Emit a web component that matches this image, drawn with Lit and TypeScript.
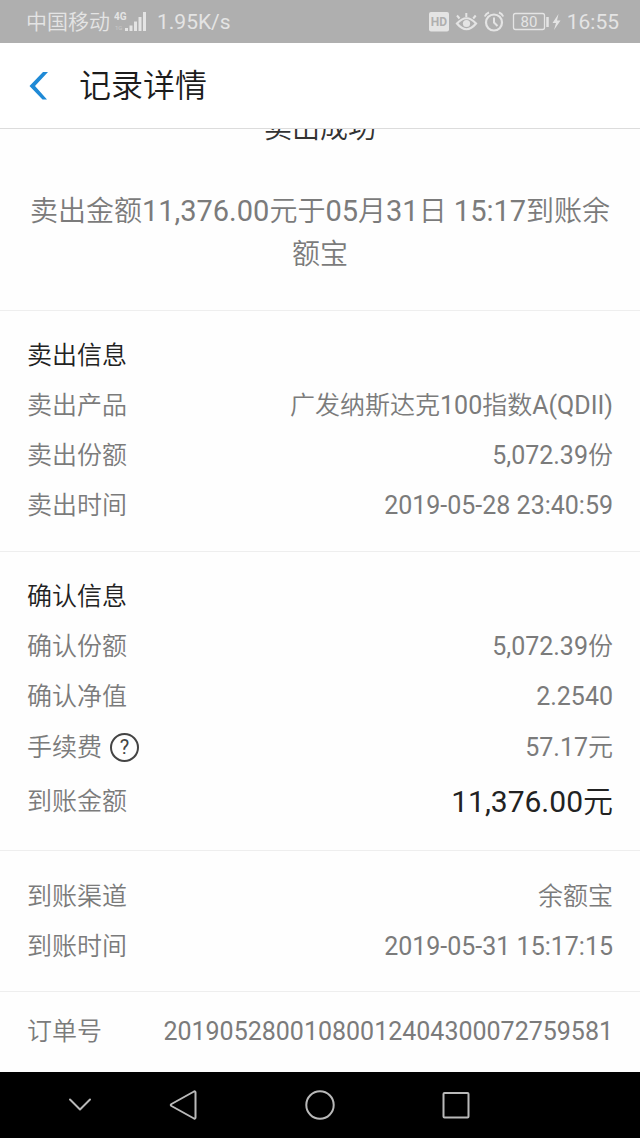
import { LitElement, html, css, nothing } from "lit";
import { customElement } from "lit/decorators.js";

interface Row {
  label: string;
  value: string;
  kind?: "fee" | "total";
}

interface Group {
  title?: string;
  rows: Row[];
}

const groups: Group[] = [
  {
    title: "卖出信息",
    rows: [
      { label: "卖出产品", value: "广发纳斯达克100指数A(QDII)" },
      { label: "卖出份额", value: "5,072.39份" },
      { label: "卖出时间", value: "2019-05-28 23:40:59" },
    ],
  },
  {
    title: "确认信息",
    rows: [
      { label: "确认份额", value: "5,072.39份" },
      { label: "确认净值", value: "2.2540" },
      { label: "手续费", value: "57.17元", kind: "fee" },
      { label: "到账金额", value: "11,376.00元", kind: "total" },
    ],
  },
  {
    rows: [
      { label: "到账渠道", value: "余额宝" },
      { label: "到账时间", value: "2019-05-31 15:17:15" },
    ],
  },
];

/** Sets the Latin runs of a mixed string in their own weight. */
const mixed = (text: string) =>
  text
    .split(/([\x20-\x7e]+)/)
    .filter((part) => part !== "")
    .map((part) => (/^[\x20-\x7e]/.test(part) ? html`<span class="latin">${part}</span>` : part));

@customElement("status-bar")
class StatusBar extends LitElement {
  static styles = css`
    :host {
      display: flex;
      align-items: center;
      justify-content: space-between;
      height: 43px;
      padding: 0 21px 0 26px;
      background: #afafaf;
      color: #e4e4e4;
      font-size: 21px;
      line-height: 28px;
      white-space: nowrap;
      box-sizing: border-box;
    }
    .side {
      display: flex;
      align-items: center;
    }
    .latin {
      font-weight: 400;
    }
    .signal {
      margin: 0 10px 0 4px;
    }
    .icons {
      margin-right: 5px;
    }
    .tag {
      font: 700 10px Roboto, sans-serif;
    }
    .small {
      font: 400 6px Roboto, sans-serif;
    }
    .hd {
      font: 700 12px Roboto, sans-serif;
    }
    .level {
      font: 400 15px Roboto, sans-serif;
    }
    svg {
      display: block;
    }
  `;

  render() {
    return html`
      <div class="side">
        <span>中国移动</span>
        <svg class="signal" width="33" height="24" viewBox="0 0 33 24" fill="#e4e4e4" aria-label="4G">
          <text class="tag" x="0" y="10">4G</text>
          <text class="small" x="1" y="20" opacity="0.5">1G</text>
          <rect x="11" y="18" width="3" height="3" />
          <rect x="15.5" y="15.5" width="3" height="5.5" />
          <rect x="20" y="11.5" width="3" height="9.5" />
          <rect x="24.5" y="7" width="3" height="14" />
          <rect x="29" y="2" width="3" height="19" />
        </svg>
        <span class="latin">1.95K/s</span>
      </div>
      <div class="side">
        <svg class="icons" width="134" height="24" viewBox="428 10 134 24" fill="none" stroke="#e4e4e4">
          <rect x="429" y="12" width="20" height="19.5" rx="2" fill="#e4e4e4" stroke="none" />
          <text class="hd" x="439" y="26" text-anchor="middle" fill="#afafaf" stroke="none">HD</text>
          <path d="M457 23.5Q466.500 13 476 23.5Q466.500 35 457 23.5Z" stroke-width="2.2" />
          <circle cx="466.5" cy="23.5" r="3.6" fill="#e4e4e4" stroke="none" />
          <path d="M466.3 17V13M459.5 18.500L457 15.5M473.2 18.500L475.7 15.5" stroke-width="2" />
          <circle cx="494" cy="22.5" r="8" stroke-width="2.2" />
          <path d="M494 17.5V22.5L497.5 26M484.8 16.500Q486 13.5 489 12.5M503.2 16.500Q502 13.5 499 12.5" stroke-width="2" />
          <rect x="513.5" y="13.5" width="31" height="16" rx="2" stroke-width="1.3" />
          <text class="level" x="529" y="27" text-anchor="middle" fill="#e4e4e4" stroke="none">80</text>
          <path d="M547.5 17V27" stroke-width="2.5" />
          <path d="M558.5 14L552.5 23H556L554 30L560.5 20.5H557Z" fill="#e4e4e4" stroke="none" />
        </svg>
        <span class="latin">16:55</span>
      </div>
    `;
  }
}

@customElement("nav-keys")
class NavKeys extends LitElement {
  static styles = css`
    :host {
      display: grid;
      grid-template-columns: 72fr 136fr 136fr 136fr;
      height: 66px;
      padding: 0 116px 0 44px;
      background: #000;
      box-sizing: border-box;
    }
    .key {
      display: grid;
      place-items: center;
      padding: 0;
      border: 0;
      background: none;
    }
    svg {
      display: block;
      fill: none;
      stroke: #b9b9b9;
      stroke-width: 2;
      stroke-linejoin: round;
      stroke-linecap: round;
    }
  `;

  render() {
    return html`
      <button class="key" aria-label="收起">
        <svg width="32" height="32" viewBox="0 0 32 32"><path d="M6 10.5L16 20.5L26 10.5" /></svg>
      </button>
      <button class="key" aria-label="返回">
        <svg width="32" height="32" viewBox="0 0 32 32"><path d="M26 2.500Q27.500 2 27.500 3.500V28.500Q27.500 30 26 29.500L3.500 17Q2 16 3.500 15Z" /></svg>
      </button>
      <button class="key" aria-label="主屏幕">
        <svg width="32" height="32" viewBox="0 0 32 32"><circle cx="16" cy="16" r="13.7" /></svg>
      </button>
      <button class="key" aria-label="最近任务">
        <svg width="32" height="32" viewBox="0 0 32 32"><rect x="3.5" y="4" width="25" height="24.5" rx="1" /></svg>
      </button>
    `;
  }
}

@customElement("app-root")
class AppRoot extends LitElement {
  static styles = css`
    :host {
      display: flex;
      flex-direction: column;
      min-height: 100vh;
      background: #fefefe;
      color: #7b7b7b;
      font-family: Roboto, "Noto Sans CJK SC", sans-serif;
      font-weight: 350;
      font-size: 25px;
    }
    .latin {
      font-weight: 400;
    }
    .header {
      display: flex;
      align-items: center;
      gap: 29px;
      height: 86px;
      padding: 0 27px;
      border-bottom: 1px solid #dcdcdc;
      box-sizing: border-box;
      background: #fff;
    }
    .back {
      padding: 0;
      border: 0;
      background: none;
    }
    .back svg {
      display: block;
    }
    .title {
      margin: 0;
      color: #1c1c1c;
      font-size: 32px;
      line-height: 40px;
      font-weight: inherit;
    }
    .content {
      flex: 1;
      overflow: hidden;
    }
    .result {
      padding: 0 27px 34px;
      text-align: center;
      font-size: 28px;
    }
    .state {
      margin: -20px 0 41px;
      color: #333;
      font-size: 28px;
      line-height: 40px;
      font-weight: inherit;
    }
    .message {
      margin: 0;
      line-height: 43px;
    }
    .message .latin {
      font-size: 29px;
    }
    .group {
      padding: 20px 27px;
      border-top: 1px solid #eee;
    }
    .plain {
      padding: 21px 27px 19px;
    }
    .group-title {
      margin: 0;
      color: #222;
      font-size: 25px;
      line-height: 50px;
      font-weight: inherit;
    }
    .list {
      margin: 0;
    }
    .row {
      display: flex;
      align-items: center;
      justify-content: space-between;
      line-height: 50px;
    }
    .fee {
      line-height: 52px;
    }
    .total {
      line-height: 56px;
    }
    .total .value {
      color: #222;
      font-size: 30px;
    }
    .label {
      display: flex;
      align-items: center;
      gap: 8px;
    }
    .value {
      margin: 0;
      text-align: right;
    }
    .help {
      width: 29px;
      height: 29px;
      margin-bottom: 2px;
      padding: 0;
      border: 2px solid #444;
      border-radius: 50%;
      background: none;
      color: #444;
      font: 400 20px/24px Roboto, sans-serif;
    }
    .order {
      padding: 15px 27px 14px;
    }
  `;

  private renderRow(row: Row) {
    return html`
      <div class="row ${row.kind ?? ""}">
        <dt class="label">
          ${row.label}${row.kind === "fee"
            ? html`<button class="help" aria-label="手续费说明">?</button>`
            : nothing}
        </dt>
        <dd class="value">${mixed(row.value)}</dd>
      </div>
    `;
  }

  render() {
    return html`
      <status-bar></status-bar>
      <header class="header">
        <button class="back" aria-label="返回">
          <svg width="23" height="30" viewBox="0 0 23 30" fill="#1f8ad6">
            <path d="M16 1H21L8 15L20 28.5H15.500L2.500 15Z" />
          </svg>
        </button>
        <h1 class="title">记录详情</h1>
      </header>
      <main class="content">
        <section class="result">
          <h2 class="state">卖出成功</h2>
          <p class="message">${mixed("卖出金额11,376.00元于05月31日 15:17到账余额宝")}</p>
        </section>
        ${groups.map(
          (group) => html`
            <section class="group ${group.title ? "" : "plain"}">
              ${group.title ? html`<h2 class="group-title">${group.title}</h2>` : nothing}
              <dl class="list">${group.rows.map((row) => this.renderRow(row))}</dl>
            </section>
          `
        )}
        <section class="group order">
          <dl class="list">${this.renderRow({ label: "订单号", value: "20190528001080012404300072759581" })}</dl>
        </section>
      </main>
      <nav-keys></nav-keys>
    `;
  }
}
